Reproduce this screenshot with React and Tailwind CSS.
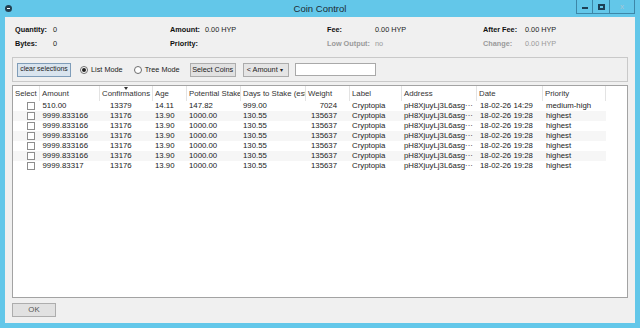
import React from "react";

const cols = [
  { label: "Select", w: 27 },
  { label: "Amount", w: 60 },
  { label: "Confirmations", w: 53 },
  { label: "Age", w: 34 },
  { label: "Potential Stake", w: 54 },
  { label: "Days to Stake (estimated)", w: 65 },
  { label: "Weight", w: 44 },
  { label: "Label", w: 52 },
  { label: "Address", w: 75 },
  { label: "Date", w: 66 },
  { label: "Priority", w: 63 },
];

const rows = [
  ["510.00", "13379", "14.11", "147.82", "999.00", "7024", "Cryptopia", "pH8XjuyLj3L6asg···", "18-02-26 14:29", "medium-high"],
  ["9999.833166", "13176", "13.90", "1000.00", "130.55", "135637", "Cryptopia", "pH8XjuyLj3L6asg···", "18-02-26 19:28", "highest"],
  ["9999.833166", "13176", "13.90", "1000.00", "130.55", "135637", "Cryptopia", "pH8XjuyLj3L6asg···", "18-02-26 19:28", "highest"],
  ["9999.833166", "13176", "13.90", "1000.00", "130.55", "135637", "Cryptopia", "pH8XjuyLj3L6asg···", "18-02-26 19:28", "highest"],
  ["9999.833166", "13176", "13.90", "1000.00", "130.55", "135637", "Cryptopia", "pH8XjuyLj3L6asg···", "18-02-26 19:28", "highest"],
  ["9999.833166", "13176", "13.90", "1000.00", "130.55", "135637", "Cryptopia", "pH8XjuyLj3L6asg···", "18-02-26 19:28", "highest"],
  ["9999.83317", "13176", "13.90", "1000.00", "130.55", "135637", "Cryptopia", "pH8XjuyLj3L6asg···", "18-02-26 19:28", "highest"],
];

function SumItem({ label, value, lw, gray }) {
  return (
    <div className="flex items-center h-[14px] whitespace-nowrap">
      <span
        className={`font-bold ${gray ? "text-[#9a9a9a]" : "text-[#111]"}`}
        style={{ width: lw }}
      >
        {label}
      </span>
      <span className={gray ? "text-[#9a9a9a]" : "text-[#222]"}>{value}</span>
    </div>
  );
}

function Radio({ checked, label }) {
  return (
    <div className="flex items-center gap-[3px] whitespace-nowrap">
      <div className="w-[8px] h-[8px] rounded-full border border-[#6d6d6d] bg-white flex items-center justify-center">
        {checked && <div className="w-[4px] h-[4px] rounded-full bg-[#222]" />}
      </div>
      <span className="text-[#222]">{label}</span>
    </div>
  );
}

export default function App() {
  return (
    <div
      className="w-[640px] h-[328px] bg-[#63c7e9] flex flex-col overflow-hidden text-[7.8px] leading-none"
      style={{ fontFamily: '"Liberation Sans", Arial, sans-serif' }}
    >
      {/* Title bar */}
      <div className="h-[17px] flex items-center relative shrink-0">
        <div className="ml-[5px] w-[7px] h-[7px] rounded-full bg-[#233f50] flex items-center justify-center">
          <div className="w-[3px] h-[1px] bg-white" />
        </div>
        <div className="flex-1 text-center text-[9.5px] text-[#1c2b33] pr-[12px]">Coin Control</div>
        <div className="absolute right-[5px] top-0 h-[14px] flex border border-t-0 border-[#3d87a8]">
          <div className="w-[16px] h-full flex items-end justify-center pb-[4px] border-r border-[#3d87a8]">
            <div className="w-[6px] h-[2px] bg-[#1d3f55]" />
          </div>
          <div className="w-[17px] h-full flex items-center justify-center border-r border-[#3d87a8]">
            <div className="w-[7px] h-[6px] border-[2px] border-[#1d3f55]" />
          </div>
          <div className="w-[24px] h-full flex items-center justify-center text-[8px] text-[#a9c6d4]">x</div>
        </div>
      </div>

      {/* Content */}
      <div className="flex-1 ml-[5px] mr-[5px] mb-[5px] bg-[#f0f0f0] flex flex-col pt-[6px] pb-[6px]">
        {/* Summary */}
        <div className="grid grid-cols-[155px_157px_156px_1fr] pl-[10px] text-[7.3px]">
          <div>
            <SumItem label="Quantity:" value="0" lw={38} />
            <SumItem label="Bytes:" value="0" lw={38} />
          </div>
          <div>
            <SumItem label="Amount:" value="0.00 HYP" lw={35} />
            <SumItem label="Priority:" value="" lw={35} />
          </div>
          <div>
            <SumItem label="Fee:" value="0.00 HYP" lw={48} />
            <SumItem label="Low Output:" value="no" lw={48} gray />
          </div>
          <div>
            <SumItem label="After Fee:" value="0.00 HYP" lw={42} />
            <SumItem label="Change:" value="0.00 HYP" lw={42} gray />
          </div>
        </div>

        {/* Toolbar groupbox */}
        <div className="mt-[6px] mx-[7px] h-[25px] border border-[#c9c9c9] flex items-center pl-[4px] shrink-0 text-[7.3px]">
          <div className="h-[14px] w-[54px] bg-[#d9e4ee] border border-[#7f9db9] flex items-center justify-center text-[#222] whitespace-nowrap text-[6.9px]">
            clear selections
          </div>
          <div className="ml-[9px]">
            <Radio checked label="List Mode" />
          </div>
          <div className="ml-[11px]">
            <Radio label="Tree Mode" />
          </div>
          <div className="ml-[10px] h-[14px] w-[46px] bg-[#e1e1e1] border border-[#adadad] flex items-center justify-center text-[#222] whitespace-nowrap">
            Select Coins
          </div>
          <div className="ml-[7px] h-[14px] w-[46px] bg-[#e5e5e5] border border-[#acacac] flex items-center pl-[3px] text-[#222] whitespace-nowrap">
            <span>&lt; Amount</span>
            <span className="ml-auto mr-[5px] text-[6px]">▾</span>
          </div>
          <div className="ml-[6px] h-[13px] w-[81px] bg-white border border-[#a9a9a9]" />
        </div>

        {/* Table */}
        <div className="mt-[3px] mx-[7px] flex-1 border border-[#a3a3a3] bg-white overflow-hidden">
          <div className="h-[15px] flex relative">
            {cols.map((c, i) => (
              <div
                key={i}
                className="h-full border-r border-[#e3e3e3] pl-[2px] flex items-center overflow-hidden whitespace-nowrap text-[#333] shrink-0"
                style={{ width: c.w }}
              >
                {c.label}
              </div>
            ))}
            <div className="flex-1" />
            <div className="absolute left-[111px] top-[1px] w-0 h-0 border-l-[2.5px] border-r-[2.5px] border-t-[3px] border-l-transparent border-r-transparent border-t-[#333]" />
          </div>
          {rows.map((r, ri) => (
            <div
              key={ri}
              className={`h-[10px] flex items-center whitespace-nowrap text-[#222] ${ri % 2 === 1 ? "bg-[#f6f6f6]" : "bg-white"}`}
              style={{ width: 593 }}
            >
              <div className="shrink-0 pl-[14px]" style={{ width: 27 }}>
                <div className="w-[8px] h-[8px] border border-[#8d8d8d] bg-white" />
              </div>
              <div className="shrink-0 pl-[2.5px] overflow-hidden" style={{ width: 60 }}>{r[0]}</div>
              <div className="shrink-0 pl-[10px] overflow-hidden" style={{ width: 53 }}>{r[1]}</div>
              <div className="shrink-0 pl-[2px] overflow-hidden" style={{ width: 34 }}>{r[2]}</div>
              <div className="shrink-0 pl-[2px] overflow-hidden" style={{ width: 54 }}>{r[3]}</div>
              <div className="shrink-0 pl-[2px] overflow-hidden" style={{ width: 65 }}>{r[4]}</div>
              <div className="shrink-0 pr-[13px] text-right overflow-hidden" style={{ width: 44 }}>{r[5]}</div>
              <div className="shrink-0 pl-[2px] overflow-hidden" style={{ width: 52 }}>{r[6]}</div>
              <div className="shrink-0 pl-[2px] overflow-hidden" style={{ width: 75 }}>{r[7]}</div>
              <div className="shrink-0 pl-[3px] overflow-hidden" style={{ width: 66 }}>{r[8]}</div>
              <div className="shrink-0 pl-[3px] overflow-hidden" style={{ width: 63 }}>{r[9]}</div>
            </div>
          ))}
        </div>

        {/* OK */}
        <div className="mt-[5px] ml-[7px] h-[14px] w-[44px] bg-[#e1e1e1] border border-[#adadad] flex items-center justify-center text-[#555] shrink-0">
          OK
        </div>
      </div>
    </div>
  );
}
